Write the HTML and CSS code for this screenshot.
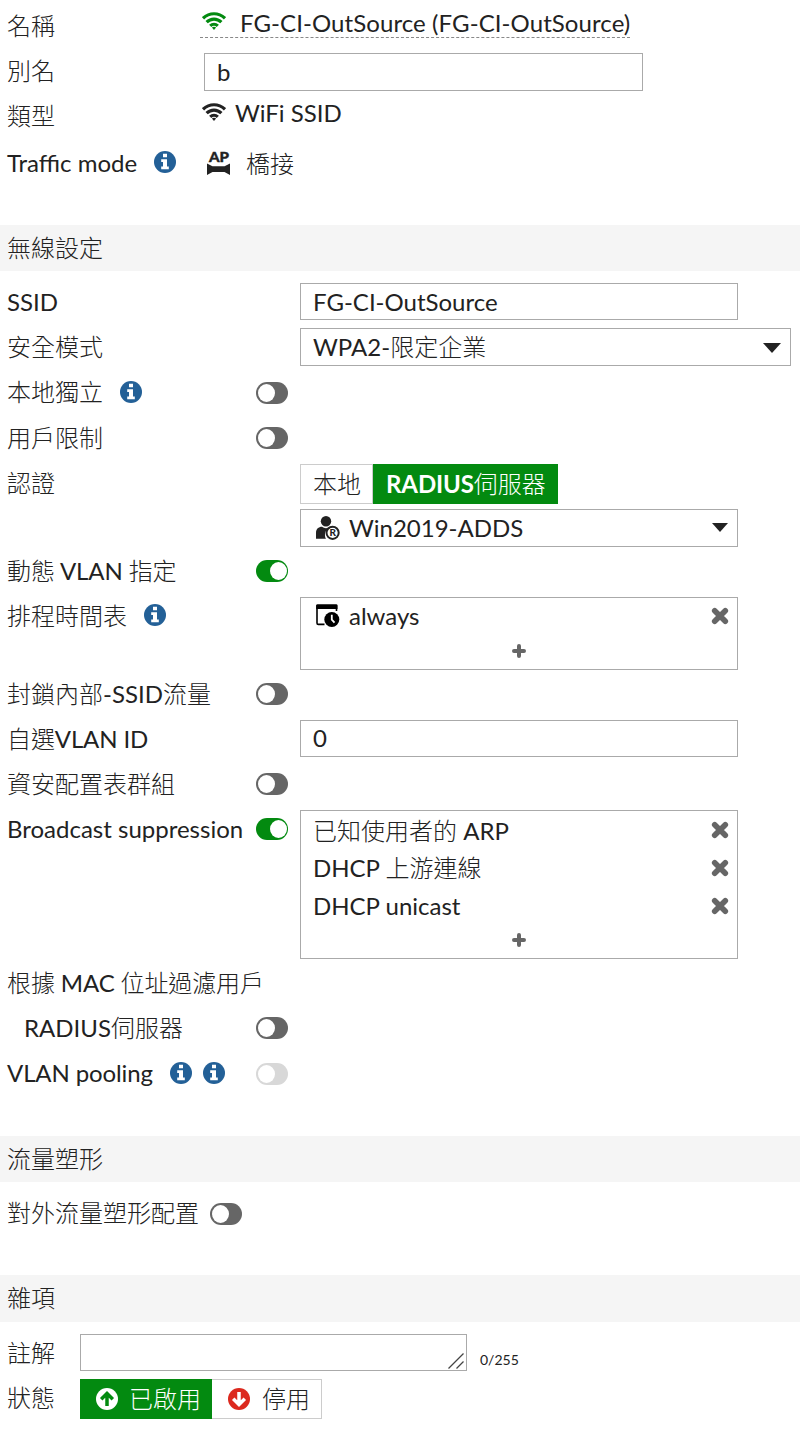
FILE: index.html
```
<!DOCTYPE html>
<html lang="zh-Hant">
  <head>
    <meta charset="UTF-8" />
    <meta name="viewport" content="width=device-width, initial-scale=1.0" />
    <title>FG-CI-OutSource</title>
    <link rel="stylesheet" href="styles.css">
  </head>
  <body>
    <!-- shared icons -->
    <svg class="defs" width="0" height="0">
      <symbol id="wifi" viewBox="0 0 24 18">
        <g fill="none" stroke="currentColor" stroke-width="3.2">
          <path d="M1 6.3C7.5 .2 16.5 .2 23 6.3" />
          <path d="M4.6 10.2C9 6 15 6 19.4 10.2" />
          <path d="M8.2 13.9C10.5 11.7 13.5 11.7 15.8 13.9" />
        </g>
        <path fill="currentColor" d="M9.9 15.6q2.1-1.5 4.2 0L12 18z" />
      </symbol>
      <symbol id="info" viewBox="0 0 22 22">
        <circle cx="11" cy="11" r="11" fill="#236097" />
        <path fill="#fff" d="M9 2.7h4v3.5H9zM7.2 8.2H13v7.2h1.8v2.8H7.2v-2.8H9V11H7.2z" />
      </symbol>
      <symbol id="times" viewBox="0 0 18 18">
        <path d="M3.7 3.7l10.6 10.6M14.3 3.7L3.7 14.3" stroke="#666" stroke-width="5.6" stroke-linecap="round" />
      </symbol>
      <symbol id="plus" viewBox="0 0 14 14">
        <path d="M7 2v10M2 7h10" stroke="#666" stroke-width="4" stroke-linecap="round" />
      </symbol>
    </svg>

    <div class="general">
      <div class="row">
        <div class="label zh">名稱</div>
        <div class="name-value">
          <svg class="wifi green"><use href="#wifi" /></svg>
          <span>FG-CI-OutSource (FG-CI-OutSource)</span>
        </div>
      </div>
      <div class="row alias">
        <div class="label zh">別名</div>
        <div class="input">b</div>
      </div>
      <div class="row">
        <div class="label zh">類型</div>
        <div class="type-value">
          <svg class="wifi"><use href="#wifi" /></svg>
          <span>WiFi SSID</span>
        </div>
      </div>
      <div class="row traffic">
        <div class="label">Traffic mode <svg class="info"><use href="#info" /></svg></div>
        <div class="traffic-value">
          <svg class="ap" viewBox="0 0 24 24">
            <text x="12" y="11" text-anchor="middle" textLength="20" lengthAdjust="spacingAndGlyphs">AP</text>
            <path d="M0 12.6l5.5 2.6h12l5.5-2.6V24l-5.5-3h-12L0 24z" />
          </svg>
          <span class="zh">橋接</span>
        </div>
      </div>
    </div>

    <h2 class="section zh">無線設定</h2>
    <div class="settings">
      <div class="row">
        <div class="label">SSID</div>
        <div class="input">FG-CI-OutSource</div>
      </div>
      <div class="row">
        <div class="label zh">安全模式</div>
        <div class="input select wide">
          <span>WPA2-<span class="zh">限定企業</span></span>
          <i class="caret"></i>
        </div>
      </div>
      <div class="row">
        <div class="label zh">本地獨立 <svg class="info"><use href="#info" /></svg></div>
        <i class="toggle"></i>
      </div>
      <div class="row">
        <div class="label zh">用戶限制</div>
        <i class="toggle"></i>
      </div>
      <div class="row auth">
        <div class="label zh">認證</div>
        <div class="field">
          <div class="buttons">
            <div class="button zh">本地</div>
            <div class="button on"><b>RADIUS</b><span class="zh">伺服器</span></div>
          </div>
          <div class="input select">
            <svg class="user" viewBox="0 0 24 24">
              <circle cx="10" cy="5.2" r="5.2" />
              <path d="M0 22.8V17c0-4 2.5-6.2 6-6.2 2.3 1.8 5.7 1.8 8 0 1.2.1 2 .4 2.8.8-4.9.6-8.3 3.6-7.8 7.6 0 1.5.4 2.5 1 3.6z" />
              <circle cx="16.6" cy="16.8" r="6.1" fill="none" stroke="#222" stroke-width="2" />
              <text x="16.7" y="20.4" text-anchor="middle">R</text>
            </svg>
            <span>Win2019-ADDS</span>
            <i class="caret small"></i>
          </div>
        </div>
      </div>
      <div class="row">
        <div class="label tight"><span class="zh">動態</span>&nbsp;VLAN&nbsp;<span class="zh">指定</span></div>
        <i class="toggle on"></i>
      </div>
      <div class="row multi">
        <div class="label zh">排程時間表 <svg class="info"><use href="#info" /></svg></div>
        <div class="list single">
          <div class="item">
            <svg class="schedule" viewBox="0 0 24 24">
              <path d="M8.5 20.4H2.3Q1 20.4 1 19V2h19.5v5" fill="none" stroke="#000" stroke-width="1.6" />
              <path d="M.2 5V1.5Q.2.2 1.5.2h18.7q1.3 0 1.3 1.3V5z" />
              <circle cx="15.8" cy="15.5" r="7.5" />
              <path d="M15.8 10.7v5l2.7 3" fill="none" stroke="#fff" stroke-width="1.8" />
            </svg>
            <span>always</span>
            <svg class="times"><use href="#times" /></svg>
          </div>
          <svg class="plus"><use href="#plus" /></svg>
        </div>
      </div>
      <div class="row">
        <div class="label"><span class="zh">封鎖內部</span>-SSID<span class="zh">流量</span></div>
        <i class="toggle"></i>
      </div>
      <div class="row">
        <div class="label tight"><span class="zh">自選</span>VLAN ID</div>
        <div class="input">0</div>
      </div>
      <div class="row">
        <div class="label zh">資安配置表群組</div>
        <i class="toggle"></i>
      </div>
      <div class="row multi">
        <div class="label">Broadcast suppression</div>
        <i class="toggle on"></i>
        <div class="list">
          <div class="item">
            <span><span class="zh">已知使用者的</span> ARP</span>
            <svg class="times"><use href="#times" /></svg>
          </div>
          <div class="item">
            <span>DHCP <span class="zh">上游連線</span></span>
            <svg class="times"><use href="#times" /></svg>
          </div>
          <div class="item">
            <span>DHCP unicast</span>
            <svg class="times"><use href="#times" /></svg>
          </div>
          <svg class="plus"><use href="#plus" /></svg>
        </div>
      </div>
      <div class="row">
        <div class="label tight"><span class="zh">根據</span>&nbsp;MAC&nbsp;<span class="zh">位址過濾用戶</span></div>
      </div>
      <div class="row">
        <div class="label indent">RADIUS<span class="zh">伺服器</span></div>
        <i class="toggle"></i>
      </div>
      <div class="row">
        <div class="label tight">
          VLAN pooling
          <svg class="info"><use href="#info" /></svg>
          <svg class="info second"><use href="#info" /></svg>
        </div>
        <i class="toggle disabled"></i>
      </div>
    </div>

    <h2 class="section zh">流量塑形</h2>
    <div class="shaping">
      <div class="row">
        <div class="label zh">對外流量塑形配置</div>
        <i class="toggle"></i>
      </div>
    </div>

    <h2 class="section misc-title zh">雜項</h2>
    <div class="misc">
      <div class="row">
        <div class="label zh">註解</div>
        <div class="input comment">
          <svg class="grip" viewBox="0 0 16 16"><path d="M.5 15.5L15.5.5M8.5 15.5l7-7" /></svg>
        </div>
        <span class="count">0/255</span>
      </div>
      <div class="row">
        <div class="label zh">狀態</div>
        <div class="buttons">
          <div class="button on zh">
            <svg viewBox="0 0 22 22">
              <circle cx="11" cy="11" r="11" fill="#fff" />
              <path d="M11 18V6M5.2 11.3L11 5.5l5.8 5.8" stroke="#038a10" />
            </svg>
            已啟用
          </div>
          <div class="button zh">
            <svg viewBox="0 0 22 22">
              <circle cx="11" cy="11" r="11" fill="#dc291e" />
              <path d="M11 4v12M5.2 10.7l5.8 5.8 5.8-5.8" stroke="#fff" />
            </svg>
            停用
          </div>
        </div>
      </div>
    </div>
  </body>
</html>
```
FILE: styles.css
```
* {
  box-sizing: border-box;
}

body {
  margin: 0;
  height: 1442px;
  background-color: #ffffff;
  color: #222222;
  font-family: Lato, "Noto Sans CJK TC", sans-serif;
  font-size: 24px;
  line-height: 38px;
}

.defs {
  position: absolute;
}

.zh {
  font-weight: 300;
}

svg {
  flex: none;
}

/* Rows */
.row {
  display: flex;
  align-items: flex-start;
  height: 37.4px;
  margin-bottom: 7.8px;
}

.label {
  flex: none;
  display: flex;
  align-items: center;
  height: 38px;
  padding-left: 7px;
  white-space: nowrap;
}

.label.indent {
  padding-left: 24px;
}

.label.tight {
  letter-spacing: -0.12px;
}

.general {
  height: 225px;
  padding-top: 7px;
}

.general .label {
  width: 200px;
}

.settings {
  height: 865px;
  padding-top: 12px;
}

.settings .label {
  width: 256px;
}

.info {
  width: 22px;
  height: 22px;
  margin: 0 0 1px 17px;
}

.info.second {
  margin-left: 11px;
}

.section {
  height: 46px;
  margin: 0;
  padding-left: 7px;
  background-color: #f5f5f5;
  font-size: 24px;
  line-height: 46px;
}

/* General block */
.name-value {
  display: flex;
  height: 31px;
  padding-left: 2px;
  border-bottom: 1px dashed #888888;
  letter-spacing: 0.08px;
  line-height: 32px;
}

.wifi {
  width: 24px;
  height: 18px;
}

.name-value .wifi {
  margin: 5px 14px 0 0;
}

.green {
  color: #038a10;
}

.alias .input {
  width: 439px;
  margin: 1px 0 0 4px;
}

.type-value {
  display: flex;
  padding-left: 2px;
  line-height: 31px;
}

.type-value .wifi {
  margin: 6px 9px 0 0;
}

.traffic {
  margin-top: 9px;
}

.traffic-value {
  display: flex;
  align-items: center;
  padding-left: 7px;
}

.traffic-value .zh {
  padding-top: 1px;
}

.ap {
  width: 24px;
  height: 24px;
  margin-right: 15px;
  fill: #222222;
  overflow: visible;
}

.ap text {
  font: 900 13.5px Lato, sans-serif;
  stroke: #222222;
  stroke-width: 0.4px;
}

/* Inputs */
.input {
  display: flex;
  align-items: center;
  width: 438px;
  height: 37.4px;
  padding-left: 12px;
  border: 1px solid #aaaaaa;
}

.settings .label + .input,
.settings .label + .list,
.field {
  margin-left: 44px;
}

.field .input {
  height: 38px;
}

.settings .wide {
  width: 491px;
}

.caret {
  margin: 2px 9px 0 auto;
  border: 9px solid transparent;
  border-top: 10px solid #222222;
  border-bottom: 0;
}

.caret.small {
  margin-top: 0;
  border-width: 8px;
  border-top-width: 9px;
  border-bottom: 0;
}

.user,
.schedule {
  width: 24px;
  height: 24px;
  margin: 0 9px 0 3px;
}

.user {
  fill: #222222;
}

.schedule {
  margin-bottom: 2px;
}

.user text {
  font: 900 10px Lato, sans-serif;
}

.auth {
  height: 83px;
  margin-bottom: 5px;
}

.buttons {
  display: flex;
}

.field .buttons {
  margin-bottom: 5px;
}

.button {
  display: flex;
  align-items: center;
  height: 40px;
  padding: 1px 11px 0 12px;
  border: 1px solid #cccccc;
  white-space: nowrap;
}

.button b {
  letter-spacing: -0.1px;
}

.button.on {
  border-color: #038a10;
  background-color: #038a10;
  color: #ffffff;
}

.button + .button {
  border-left: 0;
  padding-left: 13px;
}

/* Multi select lists */
.multi {
  height: auto;
  margin-bottom: 4.6px;
}

.list {
  width: 438px;
  margin-left: 12px;
  padding: 1px 0 11.4px 12px;
  border: 1px solid #aaaaaa;
}

.list.single {
  padding-top: 0;
}

.item {
  display: flex;
  align-items: center;
  height: 37.6px;
}

.single .item span {
  margin-bottom: 2px;
}

.times {
  width: 18px;
  height: 18px;
  margin: 0 8px 1px auto;
}

.single .times {
  margin-bottom: 2px;
}

.plus {
  display: block;
  width: 14px;
  height: 14px;
  margin: 8px auto 0 199px;
}

/* Toggle switch */
.toggle {
  flex: none;
  width: 32px;
  height: 22px;
  margin-top: 8.4px;
  padding: 2px;
  border-radius: 11px;
  background-color: #666666;
}

.toggle:after {
  content: "";
  display: block;
  width: 17px;
  height: 18px;
  border-radius: 50%;
  background-color: #ffffff;
}

.toggle.on {
  background-color: #038a10;
}

.toggle.on:after {
  margin-left: 12px;
}

.toggle.disabled {
  background-color: #d8d8d8;
}

/* Bottom sections */
.shaping {
  height: 93px;
  padding-top: 12px;
}

.shaping .label {
  width: 210px;
}

.shaping .toggle {
  margin-top: 9px;
}

.misc-title {
  height: 47px;
}

.misc {
  padding-top: 12px;
}

.misc .label {
  width: 80px;
}

.comment {
  width: 387px;
  justify-content: flex-end;
  align-items: flex-end;
  padding: 0 2px 1px 0;
}

.grip {
  width: 16px;
  height: 16px;
  stroke: #444444;
  stroke-width: 1.3;
}

.count {
  margin: 7px 0 0 13px;
  font-size: 14px;
}

.misc .button {
  padding-top: 0;
}

.misc .button svg {
  width: 22px;
  height: 22px;
  margin: 0 12px 0 3px;
  fill: none;
  stroke-width: 3.5;
}

.misc .button.on {
  padding-right: 10px;
}

.misc .button.on svg {
  margin-right: 11px;
}
```
